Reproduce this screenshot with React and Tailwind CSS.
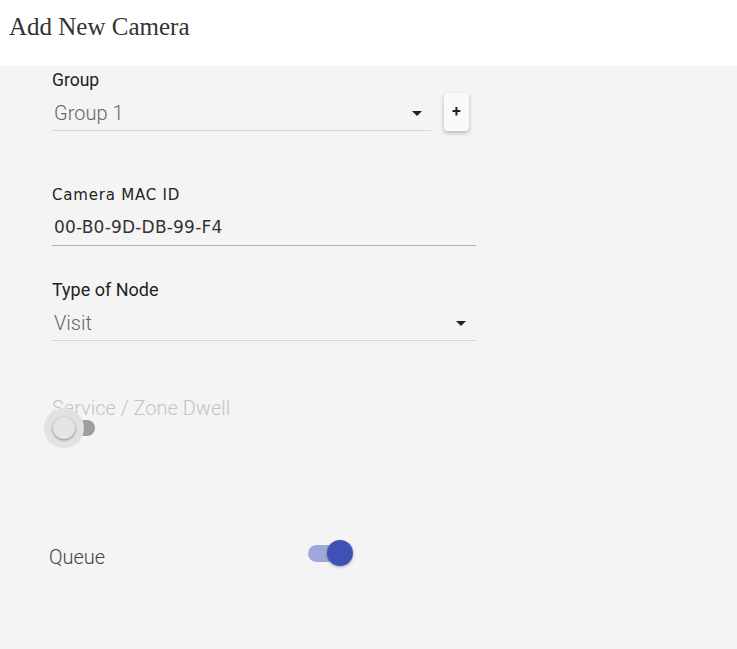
import React from "react";

function Caret() {
    return (
        <svg width="10" height="5" viewBox="0 0 10 5" className="fill-[#222]">
            <path d="M0 0h10L5 5z" />
        </svg>
    );
}

function Field({ children, className }) {
    return (
        <div className={"flex h-[41px] items-center justify-between border-b pl-[2px] pt-[6px] " + className}>
            {children}
        </div>
    );
}

export default function App() {
    return (
        <div className="flex min-h-[649px] w-full flex-col bg-[#f4f4f4]">
            <header className="flex h-[66px] items-center bg-white px-[9px] pb-[12px]">
                <h1 className="font-['Liberation_Serif',serif] text-[25px] text-[#333]">
                    Add New Camera
                </h1>
            </header>

            <section className="flex flex-col pl-[52px] pt-[4px] font-['Roboto',sans-serif]">
                <div className="flex items-end gap-[13px]">
                    <div className="w-[379px]">
                        <p className="text-[17.5px] leading-[20px] text-[#222]">Group</p>
                        <Field className="border-[#d6d6d6] pr-[9px]">
                            <span className="text-[20px] font-light text-[#666]">Group 1</span>
                            <Caret />
                        </Field>
                    </div>
                    <button className="flex h-[38px] w-[25px] items-center justify-center rounded-[4px] bg-[#fafafa] text-[16px] font-semibold text-[#222] shadow-[0_2px_4px_rgba(0,0,0,0.25)]">
                        +
                    </button>
                </div>

                <div className="mt-[54px] w-[424px]">
                    <p className="font-['DejaVu_Sans',sans-serif] text-[15px] leading-[20px] tracking-[0.8px] text-[#222]">
                        Camera MAC ID
                    </p>
                    <Field className="border-[#b4b4b4]">
                        <span className="font-['DejaVu_Sans',sans-serif] text-[17px] tracking-[0.2px] text-[#333]">
                            00-B0-9D-DB-99-F4
                        </span>
                    </Field>
                </div>

                <div className="mt-[34px] w-[424px]">
                    <p className="text-[18px] leading-[20px] text-[#222]">Type of Node</p>
                    <Field className="border-[#d6d6d6] pr-[10px]">
                        <span className="text-[20px] font-light text-[#666]">Visit</span>
                        <Caret />
                    </Field>
                </div>

                <div className="mt-[55px]">
                    <p className="text-[20px] font-light leading-[24px] text-[#c4c4c4]">
                        Service / Zone Dwell
                    </p>
                    <div className="relative ml-[-8px] mt-[-12px] flex h-[40px] w-[60px] items-center">
                        <div className="ml-[20px] h-[16px] w-[31px] rounded-full bg-[#9e9e9e]" />
                        <div className="absolute left-0 top-0 h-[40px] w-[40px] rounded-full bg-[#e2e2e2]" />
                        <div className="absolute left-[9px] top-[9px] h-[22px] w-[22px] rounded-full bg-[#e4e4e4] shadow-[0_1px_3px_rgba(0,0,0,0.4)]" />
                    </div>
                </div>

                <div className="ml-[-3px] mt-[92px] flex items-start">
                    <span className="mt-[5px] w-[259px] text-[20px] font-light leading-[24px] text-[#444]">
                        Queue
                    </span>
                    <div className="relative flex h-[26px] w-[45px] items-center">
                        <div className="h-[17px] w-[40px] rounded-full bg-[#9fa8da]" />
                        <div className="absolute right-0 top-0 h-[26px] w-[26px] rounded-full bg-[#3f51b5] shadow-[0_1px_3px_rgba(0,0,0,0.35)]" />
                    </div>
                </div>
            </section>
        </div>
    );
}
